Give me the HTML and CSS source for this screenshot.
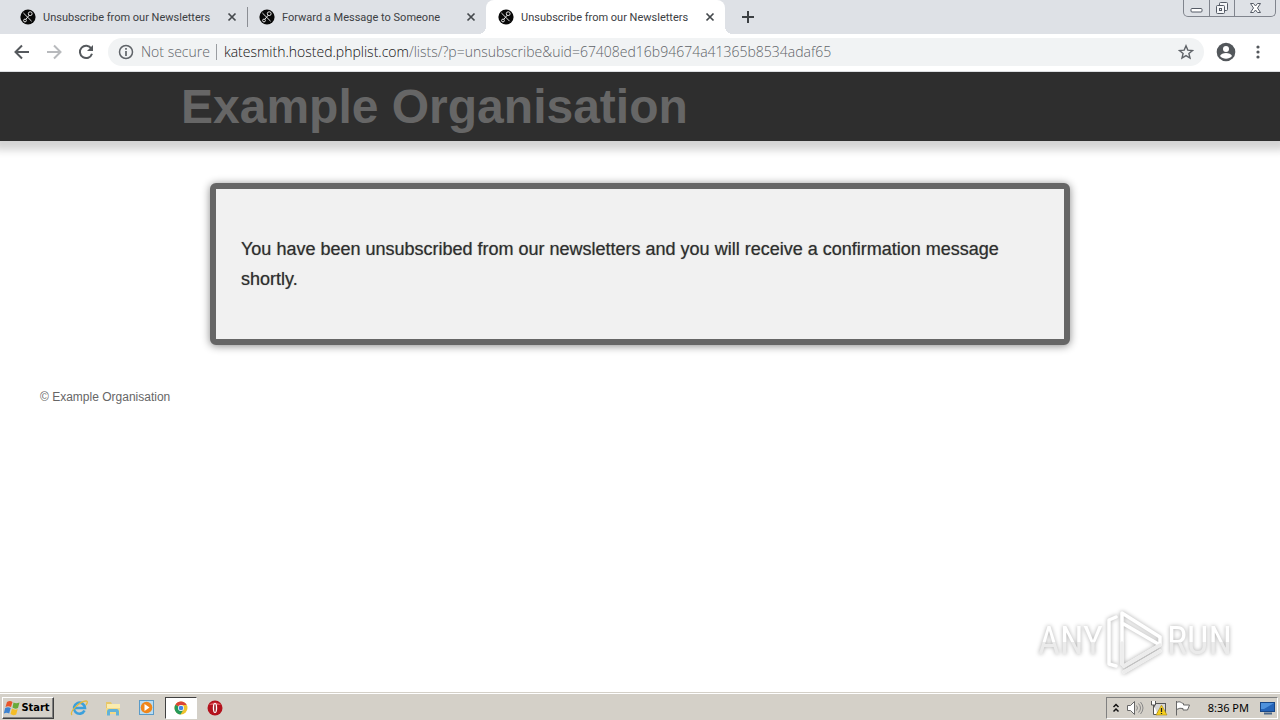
FILE: index.html
```html
<!DOCTYPE html>
<html lang="en">
<head>
<meta charset="utf-8">
<meta name="viewport" content="width=device-width, initial-scale=1">
<title>Unsubscribe from our Newsletters</title>
<link rel="stylesheet" href="styles.css">
</head>
<body>
<svg class="defs" aria-hidden="true">
  <symbol id="favicon" viewBox="0 0 16 16"><circle cx="8" cy="8" r="7.6" fill="#080808"/><g fill="none" stroke="#e4e4e4" stroke-width="1"><path d="M3.400 4l8.200 8.200M5.800 10.400L9.200 6.200"/><circle cx="10.200" cy="4.700" r="1.900"/><circle cx="5" cy="11.500" r="1.400"/></g></symbol>
  <symbol id="close" viewBox="0 0 10 10"><path d="M1.500 1.500l7 7M8.500 1.500l-7 7" stroke="#45494d" stroke-width="1.700"/></symbol>
</svg>
<div class="window">
  <header class="tabstrip">
    <div class="tab">
      <button class="tab-title" type="button"><svg class="favicon"><use href="#favicon"/></svg>Unsubscribe from our Newsletters</button>
      <button class="tab-close" type="button" aria-label="Close tab"><svg><use href="#close"/></svg></button>
    </div>
    <div class="tab divided">
      <button class="tab-title" type="button"><svg class="favicon"><use href="#favicon"/></svg>Forward a Message to Someone</button>
      <button class="tab-close" type="button" aria-label="Close tab"><svg><use href="#close"/></svg></button>
    </div>
    <div class="tab active">
      <button class="tab-title" type="button"><svg class="favicon"><use href="#favicon"/></svg>Unsubscribe from our Newsletters</button>
      <button class="tab-close" type="button" aria-label="Close tab"><svg><use href="#close"/></svg></button>
    </div>
    <button class="new-tab" type="button" aria-label="New tab"><svg width="12" height="12" viewBox="0 0 12 12"><path d="M6 0v12M0 6h12" stroke="#3c4043" stroke-width="2"/></svg></button>
    <div class="window-buttons">
      <button type="button" aria-label="Minimise"><svg width="13" height="16" viewBox="0 0 13 16"><rect x="1" y="8.500" width="11" height="3.500" rx="1" fill="#fff" stroke="#555b66"/></svg></button>
      <button type="button" aria-label="Restore"><svg width="14" height="16" viewBox="0 0 14 16"><g fill="#f5f6f8" stroke="#555b66"><rect x="4.500" y="2.500" width="8" height="8" rx="1"/><rect x="1.500" y="5.500" width="8" height="8" rx="1"/><rect x="4.500" y="8.500" width="2" height="2"/></g></svg></button>
      <button class="wide" type="button" aria-label="Close"><svg width="13" height="16" viewBox="0 0 13 16"><path d="M1.500 3.500h3l2 2.500 2-2.500h3L8.500 8l3 4.500h-3l-2-2.500-2 2.500h-3L4.500 8z" fill="#fff" stroke="#555b66"/></svg></button>
    </div>
  </header>
  <nav class="toolbar">
    <button class="nav" type="button" aria-label="Back"><svg width="16" height="16" viewBox="0 0 16 16"><path d="M15 8H2M8 1.500L1.500 8 8 14.500" fill="none" stroke="#55595d" stroke-width="2"/></svg></button>
    <button class="nav" type="button" aria-label="Forward" disabled><svg width="16" height="16" viewBox="0 0 16 16"><path d="M1 8h13M8 1.500L14.500 8 8 14.500" fill="none" stroke="#b8babd" stroke-width="2"/></svg></button>
    <button class="nav" type="button" aria-label="Reload"><svg width="16" height="16" viewBox="0 0 16 16"><path d="M13.300 4.500A6.200 6.200 0 1 0 14 9.800" fill="none" stroke="#55595d" stroke-width="2"/><path d="M15 1v6H9z" fill="#55595d"/></svg></button>
    <div class="omnibox">
      <svg width="16" height="16" viewBox="0 0 16 16"><circle cx="8" cy="8" r="6.500" fill="none" stroke="#5f6368" stroke-width="1.500"/><path d="M8 7v5M8 4v1.700" stroke="#5f6368" stroke-width="1.700"/></svg>
      <span class="security">Not secure</span>
      <div class="url" role="textbox" aria-label="Address" contenteditable="true" spellcheck="false"><span class="host">katesmith.hosted.phplist.com</span>/lists/?p=unsubscribe&amp;uid=67408ed16b94674a41365b8534adaf65</div>
      <button class="star" type="button" aria-label="Bookmark"><svg width="16" height="16" viewBox="0 0 16 16"><path d="M8 1.800l1.800 4.300 4.700.4-3.600 3 1.100 4.600-4-2.500-4 2.500 1.100-4.600-3.600-3 4.700-.4z" fill="none" stroke="#5f6368" stroke-width="1.400"/></svg></button>
    </div>
    <button class="profile" type="button" aria-label="Profile"><svg width="20" height="20" viewBox="0 0 20 20"><circle cx="10" cy="10" r="9.300" fill="#53575b"/><circle cx="10" cy="7" r="3" fill="#fff"/><path d="M4 14c1.500-4 10.500-4 12 0-3 3.500-9 3.500-12 0z" fill="#fff"/></svg></button>
    <button class="menu" type="button" aria-label="Menu"><svg width="4" height="16" viewBox="0 0 4 16"><g fill="#53575b"><circle cx="2" cy="3" r="1.600"/><circle cx="2" cy="8" r="1.600"/><circle cx="2" cy="13" r="1.600"/></g></svg></button>
  </nav>
  <main class="page">
    <div class="banner"><h1>Example Organisation</h1></div>
    <section class="card"><p>You have been unsubscribed from our newsletters and you will receive a confirmation message shortly.</p></section>
    <footer class="copyright">© Example Organisation</footer>
    <div class="watermark">
      <span>ANY</span>
      <svg width="60" height="66" viewBox="0 0 60 66"><g fill="none" stroke-linejoin="round" stroke-linecap="round" stroke="#fff" stroke-width="3.500"><path d="M11 9L4 12v44l7 2M17 56V5l38 24M17 15l38 22-36 21M19 64l36-21M55 29v8"/><path d="M17 35v21" stroke="#eee"/><path d="M19 58l36-21M19 64l36-21" stroke="#ececec"/></g></svg>
      <span>RUN</span>
    </div>
  </main>
  <footer class="taskbar">
    <button class="start" type="button"><svg width="17" height="16" viewBox="0 0 17 16"><path d="M3 2q3-2 5.500 0L7 7Q4 5.500 1.500 7z" fill="#e8542a"/><path d="M9.500 2.500Q12 4 15.500 2.500L14 8q-3 1.500-5.500-.5z" fill="#68aa3b"/><path d="M1.200 8Q4 6.500 6.700 8l-1.500 5.500Q2.500 12-.2 13.500z" fill="#3d82d0"/><path d="M8 8.500q3 2 5.700.5l-1.500 5.500q-3 1.500-5.700-.5z" fill="#f5bd27"/></svg>Start</button>
    <button class="launch" type="button" aria-label="Internet Explorer"><svg width="18" height="18" viewBox="0 0 18 18"><path d="M14.500 11.500A5.500 5.500 0 1 1 15 9H5" fill="none" stroke="#3ba0dc" stroke-width="2.600"/><path d="M2 16C-1 13 10 2 16 2c2 0 1.500 2 0 4" fill="none" stroke="#e4b93c" stroke-width="1.300"/></svg></button>
    <button class="launch" type="button" aria-label="Explorer"><svg width="18" height="18" viewBox="0 0 18 18"><path d="M2 3h5l1 2h7v10H2z" fill="#e7c76a"/><path d="M3 5h13v5H3z" fill="#fbecae"/><path d="M2 9h14v6H2z" fill="#f3d987"/><path d="M3 16.500v-4q0-2.500 2-2.500h8q2 0 2 2.500v4h-3V13H6v3.500z" fill="#62b2d8"/></svg></button>
    <button class="launch" type="button" aria-label="Media Player"><svg width="18" height="18" viewBox="0 0 18 18"><rect x="1.500" y="1.500" width="14" height="14" fill="#b8dcf2" stroke="#5a9bc8"/><circle cx="8.500" cy="8.500" r="5.800" fill="#ef861b"/><path d="M6.500 5v7l5-3.500z" fill="#fff"/></svg></button>
    <button class="launch pressed" type="button" aria-label="Chrome"><svg width="16" height="16" viewBox="0 0 16 16"><circle cx="8" cy="8" r="6.500" fill="#efc32e"/><path d="M8 8L2.400 4.700A6.500 6.500 0 0 1 13.700 5H8z" fill="#dc4437"/><path d="M2.400 4.700A6.500 6.500 0 0 0 7.500 14.500L10.500 9.500 8 8z" fill="#26995a"/><circle cx="8" cy="8" r="3" fill="#fff"/><circle cx="8" cy="8" r="2.300" fill="#4386e8"/></svg></button>
    <button class="launch" type="button" aria-label="Opera"><svg width="18" height="18" viewBox="0 0 18 18"><circle cx="9" cy="9" r="7.500" fill="#b3121d"/><path d="M3 6a7 5 0 0 1 12 0" fill="#dc5258"/><ellipse cx="9" cy="9" rx="2.200" ry="5" fill="#fff"/><ellipse cx="9" cy="9" rx=".8" ry="4" fill="#8d0d15"/></svg></button>
    <div class="tray">
      <button type="button" aria-label="Show hidden icons"><svg width="8" height="12" viewBox="0 0 8 12"><path d="M1.500 5L4 2.500 6.500 5M1.500 9.500L4 7l2.500 2.500" fill="none" stroke="#111" stroke-width="1.500"/></svg></button>
      <button type="button" aria-label="Volume"><svg width="18" height="16" viewBox="0 0 18 16"><path d="M1.500 5.500h3l4-4v13l-4-4h-3z" fill="#fff" stroke="#666"/><path d="M10.500 5.500q2 2.500 0 5M12.500 3.500q4 4.500 0 9M14.500 2q5 6 0 12" fill="none" stroke="#888"/></svg></button>
      <button type="button" aria-label="Network"><svg width="18" height="16" viewBox="0 0 18 16"><rect x="4.500" y="3.500" width="11" height="9" fill="#d6d6d6" stroke="#555"/><path d="M1.500 1v4h4V1M3.500 5v9.500H8" fill="#fff" stroke="#555"/><path d="M11.500 5L17 15H6z" fill="#f6cf1c" stroke="#a88710" stroke-width=".6"/><path d="M11.500 8v4M11.500 13v1" stroke="#222" stroke-width="1.300"/></svg></button>
      <button type="button" aria-label="Action Center"><svg width="18" height="16" viewBox="0 0 18 16"><path d="M2.500 1v14.500M2.500 2.500c4-2 5 1 7 1v1.500h6l-2 5H9V8.500q-3-1-6.500 1z" fill="#fff" stroke="#666"/></svg></button>
      <time>8:36 PM</time>
      <button type="button" aria-label="Show desktop"><svg width="16" height="16" viewBox="0 0 16 16"><rect x=".5" y="2.500" width="14" height="9" fill="#2564b8" stroke="#174687"/><path d="M1 3h13L4 9H1z" fill="#4e91dc"/><path d="M4 13.500h8" stroke="#4b6788" stroke-width="2"/></svg></button>
    </div>
  </footer>
</div>
</body>
</html>
```
FILE: styles.css
```css
* { box-sizing: border-box; }
body { margin: 0; background: #fff; font-family: "Liberation Sans", Arial, sans-serif; }
button { margin: 0; padding: 0; border: 0; background: none; font: inherit; color: inherit; display: flex; align-items: center; justify-content: center; }
svg { display: block; flex: none; }
.defs { position: absolute; width: 0; height: 0; }
.window { display: flex; flex-direction: column; min-height: 100vh; }

.tabstrip { display: flex; height: 34px; padding-left: 8px; background: #dee1e6; color: #3c4043; font: 11px Roboto, "Noto Sans", sans-serif; }
.tab { position: relative; display: flex; align-items: center; flex: 0 1 239px; min-width: 0; padding: 0 10px 0 12px; }
.tab-title { flex: 1; justify-content: flex-start; gap: 7px; min-width: 0; white-space: nowrap; overflow: hidden; }
.favicon { width: 16px; height: 16px; }
.tab-close svg { width: 10px; height: 10px; }
.divided { background: linear-gradient(#8b8e94, #8b8e94) left center / 1px 20px no-repeat; }
.active { background: #fff; border-radius: 8px 8px 0 0; }
.active::before, .active::after { content: ""; position: absolute; bottom: 0; width: 8px; height: 8px; }
.active::before { right: 100%; background: radial-gradient(circle at 0 0, transparent 8px, #fff 8px); }
.active::after { left: 100%; background: radial-gradient(circle at 100% 0, transparent 8px, #fff 8px); }
.new-tab { width: 28px; margin-left: 9px; }
.window-buttons { display: flex; height: 17px; margin-left: auto; margin-right: 4px; border: 1px solid #80848d; border-top: 0; border-radius: 0 0 5px 5px; }
.window-buttons button { width: 25px; }
.window-buttons button + button { border-left: 1px solid #80848d; }
.window-buttons .wide { width: 41px; }

.toolbar { display: flex; align-items: center; height: 38px; padding: 0 20px 2px 6px; border-bottom: 1px solid #dcdee1; background: #fff; }
.nav { width: 32px; height: 32px; }
.omnibox { display: flex; align-items: center; flex: 1; min-width: 0; height: 28px; margin: 0 12px 0 6px; padding: 0 10px; border-radius: 14px; background: #f1f3f4; color: #5f6368; font: 300 14px "Open Sans", "Noto Sans", sans-serif; white-space: nowrap; }
.security { margin-left: 7px; padding-right: 6px; border-right: 1px solid #9a9da1; line-height: 16px; }
.url { flex: 1; min-width: 0; padding-left: 7px; overflow: hidden; outline: 0; }
.host { color: #111; }
.menu { margin-left: 20px; }

.page { position: relative; flex: 1; }
.banner { height: 69px; padding-left: 181px; background: #2e2e2e; box-shadow: 0 3px 8px 6px #d4d4d4; clip-path: inset(0 0 -24px); }
.banner h1 { margin: 0; color: #666; font-size: 48px; line-height: 69px; }
.card { position: relative; max-width: 860px; margin: 42px auto 0; padding: 45px 25px; border: 6px solid #666; border-radius: 6px; background: #f1f1f1; box-shadow: 0 1px 8px #888; }
.card p { margin: 0; color: #2e2e2e; font-size: 18px; line-height: 30px; text-shadow: 0 0 1px #888; }
.copyright { margin: 43px 0 0 40px; color: #666; font-size: 12px; line-height: 18px; }
.watermark { position: absolute; right: 48px; bottom: 18px; display: flex; align-items: center; gap: 2px; font: 38px "Roboto Condensed", "Open Sans Condensed", Roboto, sans-serif; filter: drop-shadow(0 0 2px #aaa); }
.watermark span { color: transparent; background: linear-gradient(#fff 52%, #ebebeb 52%); background-clip: text; }

.taskbar { display: flex; align-items: center; height: 28px; padding: 2px 2px 0; border-top: 1px solid #d4d0c8; background: #d4d0c8; box-shadow: inset 0 1px #fff; }
.start { width: 52px; height: 22px; margin-right: 9px; padding-right: 2px; border: 1px solid; border-color: #fff #404040 #404040 #fff; box-shadow: inset -1px -1px #808080; color: #000; font: bold 11px "DejaVu Sans Condensed", "DejaVu Sans", sans-serif; }
.launch { width: 32px; height: 22px; margin-right: 2px; }
.pressed { border: 1px solid; border-color: #404040 #fff #fff #404040; background: #fff; }
.tray { display: flex; align-items: center; gap: 6px; height: 22px; margin-left: auto; padding: 0 1px 0 5px; border: 1px solid; border-color: #808080 #fff #fff #808080; color: #000; font: 11px "Noto Sans", sans-serif; }
.tray time { margin: 0 5px 0 10px; }
```
